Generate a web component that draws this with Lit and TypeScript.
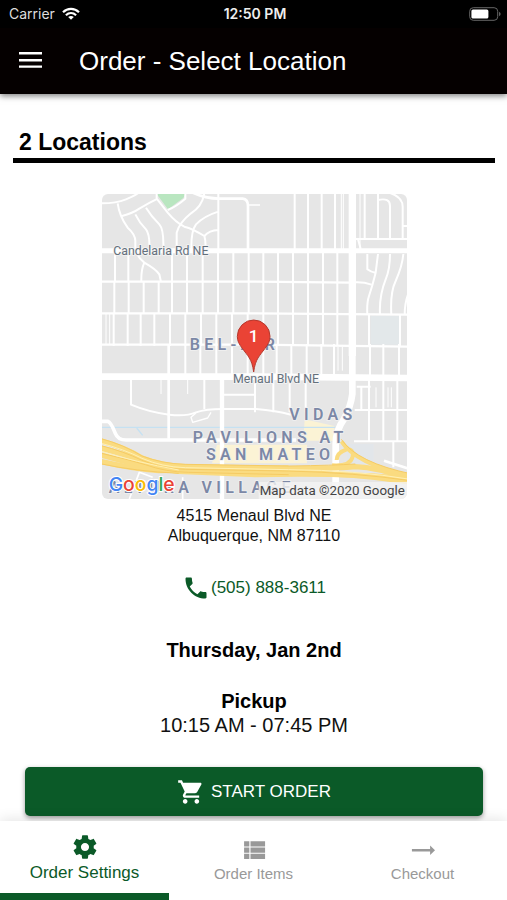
import { LitElement, html, css, svg } from "lit";
import { customElement, state } from "lit/decorators.js";
import { classMap } from "lit/directives/class-map.js";

@customElement("status-bar")
class StatusBar extends LitElement {
  static styles = css`
    :host {
      display: grid;
      grid-template-columns: 1fr auto 1fr;
      align-items: center;
      height: 28px;
      padding: 0 6px 0 9px;
      background: #000;
      color: #fff;
      font: 500 13px/16px Inter, sans-serif;
    }
    .carrier { display: flex; align-items: center; gap: 7px; font-size: 14px; font-weight: 400; color: #ddd; }
    .time { font-size: 14px; font-weight: 600; color: #eee; }
    .battery { justify-self: end; }
    svg { display: block; }
  `;
  render() {
    return html`
      <span class="carrier">Carrier
        <svg width="18" height="14" viewBox="0 0 18 14" fill="none" stroke="#fff" stroke-width="2.2">
          <path d="M1 5.2C5.6.7 12.4.7 17 5.2M3.9 8.2c3-2.8 7.2-2.8 10.2 0" />
          <path d="M9 12.8 6.2 10.1c1.7-1.5 3.9-1.5 5.6 0z" fill="#fff" stroke="none" />
        </svg>
      </span>
      <span class="time">12:50 PM</span>
      <svg class="battery" width="32" height="14" viewBox="0 0 32 14">
        <rect x=".7" y=".7" width="28" height="12.6" rx="3.6" fill="none" stroke="#666" />
        <rect x="2.4" y="2.4" width="17" height="9.2" rx="1.6" fill="#fff" />
        <path d="M30.2 4.8c1.8.8 1.8 3.6 0 4.4z" fill="#777" />
      </svg>
    `;
  }
}

const minor = (d: string, w = 6) => svg`<path d=${d} stroke-width=${w} />`;
const verticals = (xs: number[], y1: number, y2: number, w = 6) =>
  minor(xs.map((x) => `M${x} ${y1}V${y2}`).join(""), w);

@customElement("location-map")
class LocationMap extends LitElement {
  static styles = css`
    :host { display: block; border-radius: 6px; overflow: hidden; }
    svg { display: block; width: 100%; height: auto; }
    .roads { fill: none; stroke: #fff; stroke-linejoin: round; }
    .street { font: 400 37px Roboto, sans-serif; fill: #64707c; stroke: #f4f4f4; stroke-width: 5px; paint-order: stroke; }
    .district { font: 600 48px Roboto, sans-serif; letter-spacing: 13px; fill: #7c88a6; stroke: #f1f1f1; stroke-width: 5px; paint-order: stroke; }
    .wordmark { font: 500 58px Inter, sans-serif; stroke: #fff; stroke-width: 6px; paint-order: stroke; }
    .credit { font: 400 40px Roboto, sans-serif; fill: #444; }
    .pin { font: 500 51px Roboto, sans-serif; fill: #fff; }
    .blue { fill: #4285f4; }
    .red { fill: #ea4335; }
    .yellow { fill: #fbbc05; }
    .green { fill: #34a853; }
  `;
  render() {
    return html`
      <svg viewBox="0 0 915 915" role="img" aria-label="Map of 4515 Menaul Blvd NE">
        <rect width="915" height="915" fill="#e6e6e6" />
        <path d="M164 0H250L244 12 198 46Z" fill="#b9e6c0" />
        <rect x="806" y="366" width="85" height="86" fill="#e3e8ea" />
        <path d="M608 676 697 696V740H604ZM345 752H615V808H330Z" fill="#fbf3d5" />
        <path d="M735 750H815V810H735Z" fill="#e2e6ea" />
        <path d="M0 700H700M104 702 122 724" fill="none" stroke="#c5e1f2" stroke-width="4" />

        <g class="roads" transform="translate(-18 -24)">
          ${minor("M18 194H940", 15)}
          ${minor("M18 287H480L765 290M18 382H480L940 386M18 476H480L940 482", 7)}
          ${verticals([57, 97, 228, 273, 320, 366, 412, 458, 502, 546, 591, 636, 681, 724], 200, 288)}
          ${verticals([55, 98, 143, 188, 228, 273, 320, 366, 412, 458, 502, 546, 591, 636, 681, 724], 288, 384)}
          ${verticals([53, 95, 134, 175, 222, 268, 315, 361, 408, 455, 502, 546, 591, 636, 681, 724], 384, 480)}
          ${verticals([30, 41], 384, 476, 3)}
          ${minor("M18 52Q60 52 90 40 120 28 130 18M65 52Q70 90 95 125 118 145 118 165V190M78 90Q110 82 130 68 160 50 185 38M118 85Q130 110 150 130 162 145 160 190M150 65Q165 90 190 115 204 130 202 190M182 24V38L215 80Q240 110 265 122 290 128 325 150 330 165 328 190")}
          ${minor("M215 72Q240 62 268 38V20M325 20Q320 60 285 82 250 110 242 140V190M367 77Q325 90 300 115 285 135 286 190M367 132Q340 133 325 150M367 20V190")}
          ${minor("M290 20Q330 38 367 38H440Q456 40 456 60V190", 8)}
          ${minor("M456 57H492", 4)}
          ${minor("M118 190Q125 215 145 230 180 250 190 265L195 288M145 230Q135 250 136 288")}
        </g>

        <g class="roads" transform="translate(456 -24)">
          ${verticals([122, 162, 203, 243], 20, 190)}
          ${verticals([262, 318, 268], 20, 190, 3)}
          ${verticals([295], 20, 510, 22)}
          ${minor("M332 20V157M372 42Q408 34 408 60V157M372 24V157M405 20Q446 32 446 62V157M446 120H464M305 159H464M312 160 320 188")}
          ${minor("M340 204V250Q350 258 364 260M372 204 365 260Q355 300 345 330 338 350 340 386M408 204Q408 250 395 280 375 330 378 386M448 204Q445 240 425 285 408 320 412 386M464 320Q452 350 452 386M305 289Q330 288 352 296")}
          ${verticals([345, 438], 386, 480)}
        </g>

        <g class="roads" transform="translate(-18 450)">
          ${minor("M18 98H480L940 102", 20)}
          ${verticals([218], 0, 284, 8)}
          ${verticals([268, 313, 361, 408, 455], 0, 95)}
          ${verticals([195, 275], 108, 150, 3)}
          ${minor("M105 108V182Q160 205 220 212 270 218 300 205 330 195 380 195H480Q540 200 585 212M325 108V195M380 152H480")}
          ${minor("M300 207 285 220 290 235 335 222 345 205", 4)}
          ${verticals([378], 98, 465, 13)}
          ${minor("M14 232H35Q45 235 58 268 66 288 90 288H600", 11)}
          ${minor("M100 465 130 385 170 400M260 465V400", 5)}
        </g>

        <g class="roads" transform="translate(456 450)">
          ${verticals([28, 68, 112, 158, 202, 240, 348, 388, 435], 0, 95)}
          ${verticals([252, 265], 8, 80, 3)}
          ${verticals([3, 58, 107, 155], 108, 205)}
          ${minor("M295 0V150Q290 190 270 225 245 260 245 300V470", 20)}
          ${minor("M308 128H350M322 128V198M345 108V292M388 108V292M430 108V292M302 198H464M300 292H464M418 292V370")}
          ${verticals([366, 402, 412], 130, 190, 3)}
          ${minor("M460 373 390 350", 8)}
        </g>

        <g fill="none" stroke="#fadb80" stroke-width="16">
          <path d="M-6 740Q65 758 120 792 180 816 250 818L560 824Q700 824 760 818 830 820 925 858" />
          <path d="M-6 762Q70 780 130 804 190 824 260 827L560 836Q760 838 925 864" />
          <path d="M-6 782Q100 814 230 832L460 842Q760 836 925 856" />
          <path d="M-6 802Q90 824 170 830L560 822" />
          <path d="M690 814Q745 818 752 788 755 764 734 766 704 776 704 798M718 742Q765 812 930 846" stroke-width="12" />
        </g>
        <g fill="none" stroke="#f5cb64" stroke-width="3">
          <path d="M-6 733Q65 752 120 786 180 809 250 811L560 816Q700 814 760 810M-6 754Q65 772 120 799 180 824 250 826L560 831Q760 836 925 860M-6 777Q70 794 130 812 190 834 260 835L560 842M-6 809Q100 832 230 838M718 736Q765 806 930 840" />
        </g>
        <path d="M-6 747Q65 765 120 793 180 819 250 821L560 827Q760 828 925 856M-6 771Q100 804 230 828" fill="none" stroke="#fff0b4" stroke-width="3" />

        <text class="street" x="34" y="182">Candelaria Rd NE</text>
        <text class="district" x="263" y="469">BEL-AIR</text>
        <text class="street" x="393" y="567">Menaul Blvd NE</text>
        <text class="district" x="562" y="678">VIDAS</text>
        <text class="district" x="272" y="747">PAVILIONS AT</text>
        <text class="district" x="312" y="798">SAN MATEO</text>
        <text class="district" x="20" y="897">ALTURA VILLAGE</text>
        <rect x="470" y="864" width="445" height="51" fill="#f4f4f4" fill-opacity=".8" />
        <text class="wordmark" x="20" y="890"><tspan class="blue">G</tspan><tspan class="red">o</tspan><tspan class="yellow">o</tspan><tspan class="blue">g</tspan><tspan class="green">l</tspan><tspan class="red">e</tspan></text>
        <text class="credit" x="473" y="903">Map data ©2020 Google</text>

        <path d="M455 534C450 494 437 486 421 463 411 450 406 441 406 427A49 49 0 0 1 504 427C504 441 499 450 489 463 473 486 460 494 455 534Z" fill="#ea4335" stroke="#b5382d" stroke-width="3" />
        <text class="pin" x="455" y="445" text-anchor="middle">1</text>
      </svg>
    `;
  }
}

const icons = {
  settings: svg`<path d="M19.43 12.98c.04-.32.07-.64.07-.98s-.03-.66-.07-.98l2.11-1.65c.19-.15.24-.42.12-.64l-2-3.46c-.12-.22-.39-.3-.61-.22l-2.49 1c-.52-.4-1.08-.73-1.69-.98l-.38-2.65C14.46 2.18 14.25 2 14 2h-4c-.25 0-.46.18-.49.42l-.38 2.65c-.61.25-1.17.59-1.69.98l-2.49-1c-.23-.09-.49 0-.61.22l-2 3.46c-.13.22-.07.49.12.64l2.11 1.65c-.04.32-.07.65-.07.98s.03.66.07.98l-2.11 1.65c-.19.15-.24.42-.12.64l2 3.46c.12.22.39.3.61.22l2.49-1c.52.4 1.08.73 1.69.98l.38 2.65c.03.24.24.42.49.42h4c.25 0 .46-.18.49-.42l.38-2.65c.61-.25 1.17-.59 1.69-.98l2.49 1c.23.09.49 0 .61-.22l2-3.46c.12-.22.07-.49-.12-.64l-2.11-1.65zM12 15.5c-1.93 0-3.5-1.57-3.5-3.5s1.57-3.5 3.5-3.5 3.5 1.57 3.5 3.5-1.57 3.5-3.5 3.5z"/>`,
  items: svg`<path d="M3.5 4.5H8v4.4H3.5zM3.5 9.9H8v4.4H3.5zM3.5 15.3H8v4.4H3.5zM9 4.5h12.5v4.4H9zM9 9.9h12.5v4.4H9zM9 15.3h12.5v4.4H9z"/>`,
  checkout: svg`<path d="M2.5 11.1h15.6V8.2l4.2 4-4.2 4v-2.9H2.5z"/>`,
};

@customElement("app-root")
class AppRoot extends LitElement {
  @state() private selected = 0;

  private tabs = [
    { label: "Order Settings", icon: icons.settings },
    { label: "Order Items", icon: icons.items },
    { label: "Checkout", icon: icons.checkout },
  ];

  static styles = css`
    :host {
      display: flex;
      flex-direction: column;
      min-height: 100vh;
      background: #fff;
      color: #111;
      font: 16px/20px "Liberation Sans", Arial, sans-serif;
    }
    svg { display: block; fill: currentColor; }
    button { font-family: inherit; border: 0; margin: 0; cursor: pointer; }
    .top { background: #050000; color: #fff; box-shadow: 0 2px 6px rgba(0, 0, 0, 0.5); }
    .toolbar { display: flex; align-items: center; gap: 32px; height: 66px; padding: 0 16px; box-sizing: border-box; }
    .menu { padding: 0; background: none; color: #fff; }
    h1 { margin: 0; font-size: 26px; line-height: 32px; font-weight: 400; }
    main { display: flex; flex-direction: column; align-items: center; padding: 34px 12px 0 13px; text-align: center; }
    h2 {
      align-self: stretch;
      margin: 0 0 31px;
      padding: 0 6px 2px;
      border-bottom: 5px solid #000;
      font-size: 23px;
      line-height: 28px;
      text-align: left;
      color: #000;
    }
    location-map { width: 100%; max-width: 305px; }
    address { margin-top: 7px; font-style: normal; }
    .phone { display: flex; align-items: center; gap: 1px; margin-top: 28px; color: #0b5a28; font-size: 17px; text-decoration: none; }
    h3 { margin: 36px 0 0; font-size: 20px; line-height: 24px; color: #000; }
    .hours { margin: 27px 0 0; font-size: 20px; line-height: 24px; }
    .hours dt { font-weight: 700; color: #000; }
    .hours dd { margin: 0; }
    .start {
      display: flex;
      align-items: center;
      justify-content: center;
      gap: 6px;
      align-self: stretch;
      height: 49px;
      margin: 30px 12px 5px;
      background: #0b5a28;
      color: #fff;
      border-radius: 5px;
      font-size: 17px;
      box-shadow: 0 2px 5px rgba(0, 0, 0, 0.4);
    }
    .tabs { display: flex; margin-top: auto; background: #fff; box-shadow: 0 -2px 12px rgba(0, 0, 0, 0.1); }
    .tab {
      flex: 1;
      display: flex;
      flex-direction: column;
      align-items: center;
      height: 79px;
      padding: 15px 0 0;
      background: none;
      border-bottom: 7px solid transparent;
      color: #999;
      font-size: 15px;
      line-height: 20px;
      box-sizing: border-box;
    }
    .tab.active { padding-top: 12px; color: #0b5a28; border-color: #0b5a28; font-size: 17px; line-height: 24px; }
  `;

  render() {
    return html`
      <header class="top">
        <status-bar></status-bar>
        <div class="toolbar">
          <button class="menu" aria-label="Menu">
            <svg width="31" height="32" viewBox="0 0 31 32"><path d="M3 7h23v2.4H3zM3 14h23v2.4H3zM3 20.4h23v2.4H3z" /></svg>
          </button>
          <h1>Order - Select Location</h1>
        </div>
      </header>
      <main>
        <h2>2 Locations</h2>
        <location-map></location-map>
        <address>4515 Menaul Blvd NE<br />Albuquerque, NM 87110</address>
        <a class="phone" href="tel:5058883611">
          <svg width="28" height="28" viewBox="0 0 24 24"><path d="M6.62 10.79c1.44 2.83 3.76 5.14 6.59 6.59l2.2-2.2c.27-.27.67-.36 1.02-.24 1.12.37 2.33.57 3.57.57.55 0 1 .45 1 1V20c0 .55-.45 1-1 1-9.39 0-17-7.61-17-17 0-.55.45-1 1-1h3.5c.55 0 1 .45 1 1 0 1.25.2 2.45.57 3.57.11.35.03.74-.25 1.02l-2.2 2.2z" /></svg>
          (505) 888-3611
        </a>
        <h3>Thursday, Jan 2nd</h3>
        <dl class="hours"><dt>Pickup</dt><dd>10:15 AM - 07:45 PM</dd></dl>
        <button class="start">
          <svg width="28" height="28" viewBox="0 0 24 24"><path d="M7 18c-1.1 0-1.99.9-1.99 2S5.9 22 7 22s2-.9 2-2-.9-2-2-2zM1 2v2h2l3.6 7.59-1.35 2.45c-.16.28-.25.61-.25.96 0 1.1.9 2 2 2h12v-2H7.42c-.14 0-.25-.11-.25-.25l.03-.12.9-1.63h7.45c.75 0 1.41-.41 1.75-1.03l3.58-6.49c.08-.14.12-.31.12-.48 0-.55-.45-1-1-1H5.21l-.94-2H1zm16 16c-1.1 0-1.99.9-1.99 2s.89 2 1.99 2 2-.9 2-2-.9-2-2-2z" /></svg>
          START ORDER
        </button>
      </main>
      <nav class="tabs">
        ${this.tabs.map(
          (tab, i) => html`
            <button class=${classMap({ tab: true, active: i === this.selected })} @click=${() => (this.selected = i)}>
              <svg width="28" height="28" viewBox="0 0 24 24">${tab.icon}</svg>
              ${tab.label}
            </button>
          `
        )}
      </nav>
    `;
  }
}
